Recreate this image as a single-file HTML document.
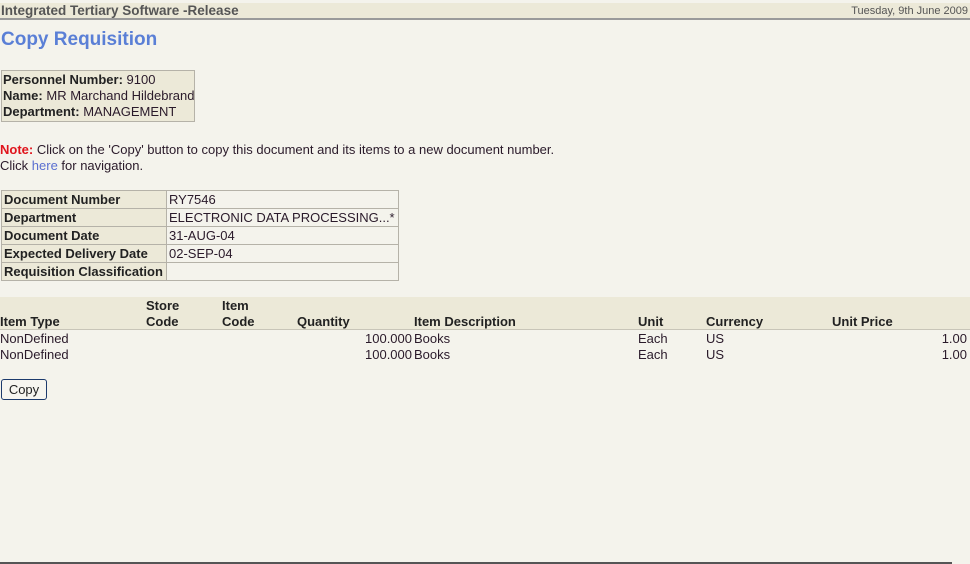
<!DOCTYPE html>
<html><head><meta charset="utf-8"><style>
*{margin:0;padding:0;box-sizing:border-box}
body{width:970px;height:564px;background:#f4f3ec;font-family:"Liberation Sans",Arial,sans-serif;font-size:13px;color:#2a1a2a;position:relative;overflow:hidden}
.a{position:absolute;white-space:nowrap}
b{font-weight:bold;color:#222}
#hdr{position:absolute;left:0;top:3px;width:970px;height:17px;background:#ece9d8;border-bottom:2px solid #9a9a9a}
table{border-collapse:collapse}
.info td{border:1px solid #b5b2a8;padding:0 2px;height:18px;line-height:17px}
.info td.l{background:#ece9d8;font-weight:bold;color:#222;width:165px}
</style></head><body>
<div id="hdr"></div>
<div class="a" style="left:1px;top:3px;font-size:13.5px;font-weight:bold;color:#555">Integrated Tertiary Software -Release</div>
<div class="a" style="right:2px;top:5px;font-size:11px;color:#555">Tuesday, 9th June 2009</div>
<div class="a" style="left:1px;top:29px;font-size:19px;font-weight:bold;color:#5a7fd6">Copy Requisition</div>
<div class="a" style="left:1px;top:70px;width:194px;height:52px;background:#ece9d8;border:1px solid #b5b2a8;padding:1px 1px;line-height:16px">
<b>Personnel Number:</b> 9100<br><b>Name:</b> MR Marchand Hildebrand<br><b>Department:</b> MANAGEMENT</div>
<div class="a" style="left:0;top:142px;line-height:16px"><span style="color:#e0141c;font-weight:bold">Note:</span> Click on the 'Copy' button to copy this document and its items to a new document number.<br>Click <span style="color:#5a6fd0">here</span> for navigation.</div>
<table class="info a" style="left:1px;top:190px;width:398px">
<tr><td class="l">Document Number</td><td>RY7546</td></tr>
<tr><td class="l">Department</td><td>ELECTRONIC DATA PROCESSING...*</td></tr>
<tr><td class="l">Document Date</td><td>31-AUG-04</td></tr>
<tr><td class="l">Expected Delivery Date</td><td>02-SEP-04</td></tr>
<tr><td class="l">Requisition Classification</td><td></td></tr>
</table>
<div class="a" style="left:0;top:297px;width:970px;height:33px;background:#ece9d8;border-bottom:1px solid #c8c5b8"></div>
<div class="a" style="left:0;top:314px;font-weight:bold;color:#222">Item Type</div>
<div class="a" style="left:146px;top:298px;font-weight:bold;color:#222;line-height:16px">Store<br>Code</div>
<div class="a" style="left:222px;top:298px;font-weight:bold;color:#222;line-height:16px">Item<br>Code</div>
<div class="a" style="left:297px;top:314px;font-weight:bold;color:#222">Quantity</div>
<div class="a" style="left:414px;top:314px;font-weight:bold;color:#222">Item Description</div>
<div class="a" style="left:638px;top:314px;font-weight:bold;color:#222">Unit</div>
<div class="a" style="left:706px;top:314px;font-weight:bold;color:#222">Currency</div>
<div class="a" style="left:832px;top:314px;font-weight:bold;color:#222">Unit Price</div>
<div class="a" style="left:0;top:331px;line-height:16px">NonDefined<br>NonDefined</div>
<div class="a" style="right:558px;top:331px;line-height:16px;text-align:right">100.000<br>100.000</div>
<div class="a" style="left:414px;top:331px;line-height:16px">Books<br>Books</div>
<div class="a" style="left:638px;top:331px;line-height:16px">Each<br>Each</div>
<div class="a" style="left:706px;top:331px;line-height:16px">US<br>US</div>
<div class="a" style="right:3px;top:331px;line-height:16px;text-align:right">1.00<br>1.00</div>
<div class="a" style="left:1px;top:379px;width:46px;height:21px;border:1px solid #1c3a6c;border-radius:3px;background:#f6f5ef;text-align:center;line-height:19px;font-size:13px;color:#222">Copy</div>
<div class="a" style="left:0;top:562px;width:952px;height:2px;background:#555"></div>
</body></html>
